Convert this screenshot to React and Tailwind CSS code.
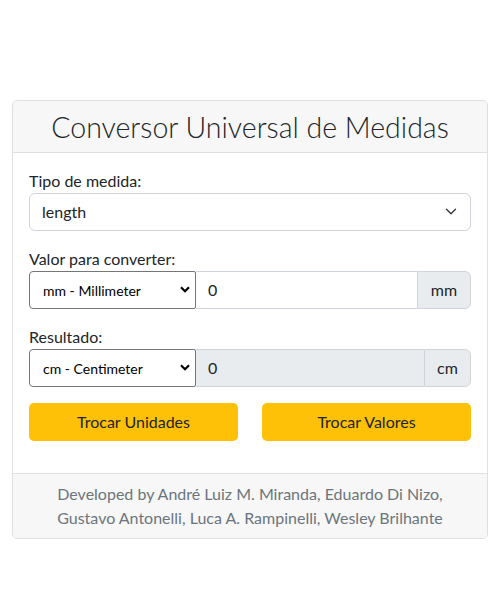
import React from "react";

const font = { fontFamily: "Lato, 'Open Sans', sans-serif" };

function NativeSelect({ value }) {
  return (
    <div className="relative w-[167px] shrink-0">
      <select
        defaultValue={value}
        className="appearance-none w-full h-[38px] border border-[#767676] rounded-l-[4px] rounded-r-[2px] bg-white pl-[13px] text-[14px] text-black outline-none"
        style={font}
      >
        <option>{value}</option>
      </select>
      <svg className="absolute right-[6px] top-[15px] pointer-events-none" width="10" height="7" viewBox="0 0 10 7">
        <path d="M1 1.2 5 5.2 9 1.2" fill="none" stroke="#000" strokeWidth="2.2" />
      </svg>
    </div>
  );
}

export default function App() {
  return (
    <div className="bg-white w-[500px] h-[615px] pt-[100px] px-[12px] text-[#212529]" style={font}>
      <div className="border border-[#dfdfdf] rounded-[5px] overflow-hidden bg-white">
        <div className="bg-[#f7f7f7] border-b border-[#dfdfdf] h-[52px] flex items-center justify-center">
          <h3 className="text-[28.5px] font-light leading-[34px] text-[#212529]">Conversor Universal de Medidas</h3>
        </div>
        <div className="px-[16px] pt-[16px] pb-[32px]">
          <div className="text-[16px] leading-[24px]">Tipo de medida:</div>
          <div className="relative">
            <select
              defaultValue="length"
              className="appearance-none w-full h-[38px] border border-[#ced4da] rounded-[6px] bg-white pl-[12px] text-[16px] text-[#212529] outline-none"
              style={font}
            >
              <option>length</option>
            </select>
            <svg className="absolute right-[14px] top-[14px] pointer-events-none" width="12" height="9" viewBox="0 0 16 12">
              <path d="m2 3 6 6 6-6" fill="none" stroke="#343a40" strokeWidth="1.8" strokeLinecap="round" strokeLinejoin="round" />
            </svg>
          </div>

          <div className="mt-[16px] text-[16px] leading-[24px]">Valor para converter:</div>
          <div className="flex h-[38px]">
            <NativeSelect value="mm - Millimeter" />
            <div className="flex-1 border-y border-[#ced4da] flex items-center pl-[12px] text-[16px]">0</div>
            <div className="w-[54px] bg-[#e9ecef] border border-[#ced4da] rounded-r-[6px] flex items-center justify-center text-[16px]">mm</div>
          </div>

          <div className="mt-[16px] text-[16px] leading-[24px]">Resultado:</div>
          <div className="flex h-[38px]">
            <NativeSelect value="cm - Centimeter" />
            <div className="flex-1 bg-[#e9ecef] border-y border-[#ced4da] flex items-center pl-[12px] text-[16px]">0</div>
            <div className="w-[47px] bg-[#e9ecef] border border-[#ced4da] rounded-r-[6px] flex items-center justify-center text-[16px]">cm</div>
          </div>

          <div className="mt-[16px] grid grid-cols-2 gap-[24px]">
            <button className="h-[38px] bg-[#ffc107] rounded-[5px] text-[16px] text-[#212529]" style={font}>Trocar Unidades</button>
            <button className="h-[38px] bg-[#ffc107] rounded-[5px] text-[16px] text-[#212529]" style={font}>Trocar Valores</button>
          </div>
        </div>
        <div className="bg-[#f7f7f7] border-t border-[#dfdfdf] py-[8px] px-[16px] text-center text-[16px] leading-[24px] text-[#6c757d]">
          Developed by André Luiz M. Miranda, Eduardo Di Nizo,<br />
          Gustavo Antonelli, Luca A. Rampinelli, Wesley Brilhante
        </div>
      </div>
    </div>
  );
}
